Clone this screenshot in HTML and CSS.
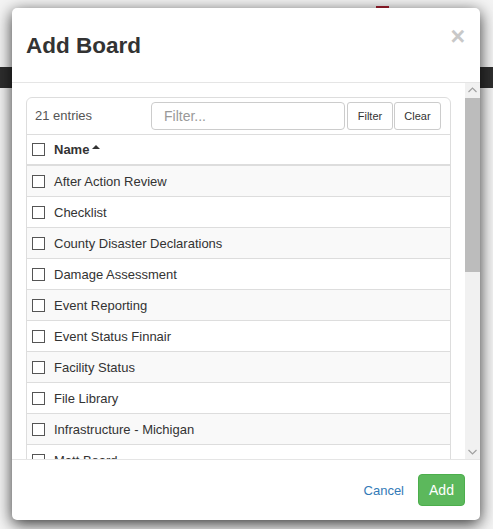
FILE: index.html
```html
<!DOCTYPE html>
<html>
<head>
<meta charset="utf-8">
<link rel="stylesheet" href="styles.css">
</head>
<body>
<div class="modal">
  <div class="modal-header">
    <h2 class="modal-title">Add Board</h2>
    <span class="close">&times;</span>
  </div>
  <div class="modal-body">
    <div class="body-content">
      <div class="panel">
        <div class="toolbar">
          <span class="count">21 entries</span>
          <input class="filter-input" type="text" placeholder="Filter...">
          <button class="btn btn-filter">Filter</button>
          <button class="btn btn-clear">Clear</button>
        </div>
        <div class="row head"><span class="cb"></span><span class="name">Name</span><span class="caret"></span></div>
        <div class="row odd first"><span class="cb"></span>After Action Review</div>
        <div class="row"><span class="cb"></span>Checklist</div>
        <div class="row odd"><span class="cb"></span>County Disaster Declarations</div>
        <div class="row"><span class="cb"></span>Damage Assessment</div>
        <div class="row odd"><span class="cb"></span>Event Reporting</div>
        <div class="row"><span class="cb"></span>Event Status Finnair</div>
        <div class="row odd"><span class="cb"></span>Facility Status</div>
        <div class="row"><span class="cb"></span>File Library</div>
        <div class="row odd"><span class="cb"></span>Infrastructure - Michigan</div>
        <div class="row"><span class="cb"></span>Matt Board</div>
      </div>
    </div>
    <div class="scrollbar">
      <div class="sb-btn">
        <svg width="15" height="15" viewBox="0 0 15 15"><path d="M3.5 9 L7.5 5 L11.5 9" fill="none" stroke="#a0a0a0" stroke-width="1.2"/></svg>
      </div>
      <div class="sb-track">
        <div class="sb-thumb"></div>
      </div>
      <div class="sb-btn">
        <svg width="15" height="15" viewBox="0 0 15 15"><path d="M3.5 6 L7.5 10 L11.5 6" fill="none" stroke="#a0a0a0" stroke-width="1.2"/></svg>
      </div>
    </div>
  </div>
  <div class="modal-footer">
    <a class="cancel" href="#">Cancel</a>
    <button class="btn-add">Add</button>
  </div>
</div>
</body>
</html>
```
FILE: styles.css
```css
html, body {
  margin: 0;
  padding: 0;
}
body {
  width: 493px;
  height: 529px;
  overflow: hidden;
  font-family: "Liberation Sans", Arial, sans-serif;
  color: #333;
  background:
    linear-gradient(#a3202f, #a3202f) 376px 6px / 13px 3px no-repeat,
    linear-gradient(to bottom, #f4f4f4 0, #f4f4f4 67px, #2e2e2e 67px, #2e2e2e 88px, #f4f4f4 88px) no-repeat;
  padding-top: 8px;
  box-sizing: border-box;
}
.modal {
  margin-left: 12px;
  width: 468px;
  height: 512px;
  background: #fff;
  border-radius: 5px;
  box-shadow: 0 4px 16px rgba(0, 0, 0, 0.8);
  display: flex;
  flex-direction: column;
  overflow: hidden;
}
.modal-header {
  flex: none;
  height: 74px;
  border-bottom: 1px solid #e5e5e5;
  display: flex;
  align-items: flex-start;
  justify-content: space-between;
  padding: 0 15px 0 14px;
}
.modal-title {
  margin: 26px 0 0 0;
  font-size: 22.5px;
  font-weight: bold;
  color: #333;
  line-height: 24px;
}
.close {
  margin-top: 14px;
  font-size: 25px;
  font-weight: bold;
  color: #c8c8c8;
  line-height: 28px;
}
.modal-body {
  flex: 1;
  min-height: 0;
  display: flex;
}
.body-content {
  flex: 1;
  overflow: hidden;
  padding: 14px 0 0 14px;
}
.scrollbar {
  flex: none;
  width: 15px;
  background: #f1f1f1;
  display: flex;
  flex-direction: column;
}
.sb-btn {
  height: 15px;
  flex: none;
}
.sb-btn svg {
  display: block;
}
.sb-track {
  flex: 1;
}
.sb-thumb {
  height: 174px;
  background: #bcbcbc;
}
.panel {
  width: 423px;
  border: 1px solid #ddd;
  border-radius: 6px;
}
.toolbar {
  height: 36px;
  border-bottom: 1px solid #ddd;
  display: flex;
  align-items: center;
  padding: 0 9px 0 8px;
  font-size: 13px;
}
.count {
  color: #555;
  width: 116px;
  margin-top: -2px;
}
.filter-input {
  width: 194px;
  height: 28px;
  box-sizing: border-box;
  border: 1px solid #ccc;
  border-radius: 4px;
  padding: 0 12px;
  font-family: "Liberation Sans", Arial, sans-serif;
  font-size: 14px;
  margin: 0 2px 0 0;
  outline: none;
}
.filter-input::placeholder {
  color: #999;
}
.btn {
  height: 28px;
  box-sizing: border-box;
  border: 1px solid #ccc;
  border-radius: 3px;
  background: #fff;
  font-family: "Liberation Sans", Arial, sans-serif;
  font-size: 11px;
  color: #333;
  padding: 0;
  margin: 0;
}
.btn-filter {
  width: 46px;
  margin-right: 1px;
}
.btn-clear {
  width: 47px;
}
.row {
  height: 31px;
  box-sizing: border-box;
  border-top: 1px solid #ddd;
  display: flex;
  align-items: center;
  padding-left: 5px;
  font-size: 13px;
  color: #333;
}
.row.head {
  border-top: none;
  height: 31px;
  border-bottom: 2px solid #ddd;
}
.row.first {
  border-top: none;
  height: 30px;
}
.row.odd {
  background: #f9f9f9;
}
.cb {
  width: 11px;
  height: 11px;
  border: 1px solid #555;
  background: #fff;
  margin-right: 9px;
  flex: none;
}
.name {
  font-weight: bold;
}
.caret {
  width: 0;
  height: 0;
  border-left: 4px solid transparent;
  border-right: 4px solid transparent;
  border-bottom: 4px solid #333;
  margin-left: 3px;
  margin-top: -5px;
}
.modal-footer {
  flex: none;
  height: 61px;
  border-top: 1px solid #e5e5e5;
  display: flex;
  justify-content: flex-end;
  align-items: flex-start;
  padding: 14px 15px 0 0;
  box-sizing: border-box;
}
.cancel {
  color: #337ab7;
  text-decoration: none;
  font-size: 13px;
  margin-top: 9px;
  margin-right: 14px;
}
.btn-add {
  width: 47px;
  height: 32px;
  border: 1px solid #4cae4c;
  border-radius: 4px;
  background: #5cb85c;
  color: #fff;
  font-family: "Liberation Sans", Arial, sans-serif;
  font-size: 14px;
  padding: 0;
}
```
